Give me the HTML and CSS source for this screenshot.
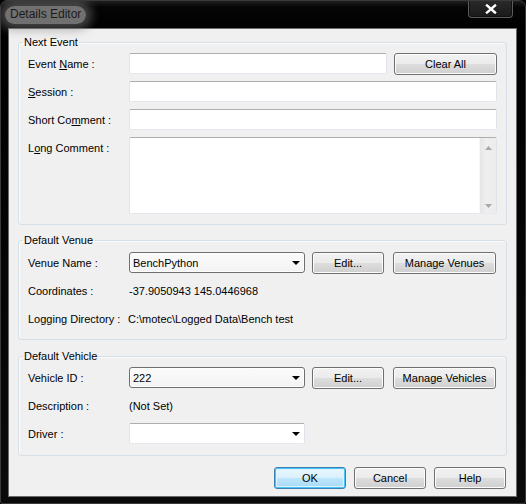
FILE: index.html
```html
<!DOCTYPE html>
<html>
<head>
<meta charset="utf-8">
<title>Details Editor</title>
<link rel="stylesheet" href="styles.css">
</head>
<body>
<div class="window">
  <div class="titlebar">
    <span class="title">Details Editor</span>
    <div class="close">
      <svg width="12" height="10" viewBox="0 0 12 10"><path d="M2 1.5 L10 8.5 M10 1.5 L2 8.5" stroke="#fff" stroke-width="2.4" stroke-linecap="square" fill="none"/></svg>
    </div>
  </div>
  <div class="client">
    <fieldset class="group g1">
      <legend>Next Event</legend>
      <div class="row">
        <span class="label">Event <u>N</u>ame :</span>
        <div class="edit w-event"></div>
        <button class="btn w-wide">Clear All</button>
      </div>
      <div class="row">
        <span class="label"><u>S</u>ession :</span>
        <div class="edit grow"></div>
      </div>
      <div class="row">
        <span class="label">Short Co<u>m</u>ment :</span>
        <div class="edit grow"></div>
      </div>
      <div class="row tall">
        <span class="label">L<u>o</u>ng Comment :</span>
        <div class="edit grow memo">
          <div class="memo-text"></div>
          <div class="vscroll">
            <svg width="7" height="4" viewBox="0 0 7 4"><path d="M0 4 L3.5 0 L7 4 Z" fill="#a8a8a8"/></svg>
            <svg width="7" height="4" viewBox="0 0 7 4"><path d="M0 0 L7 0 L3.5 4 Z" fill="#a8a8a8"/></svg>
          </div>
        </div>
      </div>
    </fieldset>

    <fieldset class="group g2">
      <legend>Default Venue</legend>
      <div class="row">
        <span class="label">Venue Name :</span>
        <div class="combo dark"><span>BenchPython</span><i class="arrow"></i></div>
        <button class="btn w-edit">Edit...</button>
        <button class="btn w-wide">Manage Venues</button>
      </div>
      <div class="row">
        <span class="label">Coordinates :</span>
        <span class="value">-37.9050943 145.0446968</span>
      </div>
      <div class="row">
        <span class="label">Logging Directory :</span>
        <span class="value shift">C:\motec\Logged Data\Bench test</span>
      </div>
    </fieldset>

    <fieldset class="group g3">
      <legend>Default Vehicle</legend>
      <div class="row">
        <span class="label">Vehicle ID :</span>
        <div class="combo dark"><span>222</span><i class="arrow"></i></div>
        <button class="btn w-edit">Edit...</button>
        <button class="btn w-wide">Manage Vehicles</button>
      </div>
      <div class="row">
        <span class="label">Description :</span>
        <span class="value">(Not Set)</span>
      </div>
      <div class="row">
        <span class="label">Driver :</span>
        <div class="combo light"><span></span><i class="arrow"></i></div>
      </div>
    </fieldset>

    <div class="actions">
      <button class="btn w-edit default">OK</button>
      <button class="btn w-edit">Cancel</button>
      <button class="btn w-edit">Help</button>
    </div>
  </div>
</div>
</body>
</html>
```

FILE: styles.css
```css
html, body {
  margin: 0;
  padding: 0;
  background: #000;
}

body {
  width: 526px;
  height: 504px;
  overflow: hidden;
  font-family: "Liberation Sans", Arial, sans-serif;
  font-size: 11px;
  color: #000;
}

.window {
  width: 526px;
  height: 504px;
  box-sizing: border-box;
  background: linear-gradient(#1e1e1e 0px, #050505 6px, #000 30px, #0a0a0a 100%);
  border: 1px solid #3a3a3a;
  border-radius: 7px 7px 2px 2px;
  overflow: hidden;
}

.titlebar {
  height: 27px;
  display: flex;
  align-items: flex-start;
  justify-content: space-between;
}

.title {
  margin: 5px 0 0 4px;
  padding: 1px 5px 2px 5px;
  font-size: 12px;
  line-height: 15px;
  color: #1b1b1b;
  background: rgba(150, 150, 150, 0.75);
  border-radius: 10px;
  box-shadow: 0 0 10px 6px rgba(120, 120, 120, 0.55);
}

.close {
  width: 45px;
  height: 18px;
  margin-top: -1px;
  margin-right: 12px;
  box-sizing: border-box;
  border: 1px solid #5c5c5c;
  border-top: none;
  border-radius: 0 0 4px 4px;
  background: linear-gradient(#2a2a2a, #1a1a1a);
  box-shadow: inset 0 0 0 1px #111;
  display: flex;
  align-items: center;
  justify-content: center;
  padding-top: 1px;
}

.close svg { display: block; }

.client {
  width: 509px;
  height: 469px;
  margin-left: 7px;
  box-sizing: border-box;
  background: #f0f0f0;
  border: 1px solid #6b6b6b;
  padding: 7px 9px 0 9px;
}

.group {
  margin: 0;
  padding: 4px 9px 10px 9px;
  border: 1px solid #d5dfe5;
  border-radius: 3px;
  box-shadow: inset 1px 1px 0 #fbfbfb;
  min-width: 0;
  display: flex;
  flex-direction: column;
  gap: 7px;
}

.group legend {
  padding: 0 1px;
  margin-left: -5px;
  line-height: 13px;
  font-size: 11px;
}

.g2 { margin-top: 9px; padding-top: 5px; }
.g3 { margin-top: 10px; padding-bottom: 11px; }

.row {
  height: 21px;
  display: flex;
  align-items: center;
}

.row.tall {
  height: 77px;
  align-items: flex-start;
}

.row.tall .label { margin-top: 5px; }

.label {
  width: 101px;
  flex: none;
  white-space: nowrap;
}

.value { white-space: nowrap; }
.value.shift { margin-left: -1px; }

u { text-decoration: underline; text-underline-offset: 1px; }

.edit {
  height: 21px;
  box-sizing: border-box;
  background: #fff;
  border: 1px solid #e2e3ea;
  border-top-color: #abadb3;
  border-bottom-color: #e3e9ef;
  border-radius: 2px;
}

.w-event { width: 258px; flex: none; margin-right: 7px; }
.grow { flex: 1; }

.memo {
  height: 77px;
  display: flex;
  justify-content: flex-end;
}

.memo-text { flex: 1; }

.vscroll {
  width: 17px;
  margin: 0;
  box-sizing: border-box;
  background: linear-gradient(90deg, #e6e6e6, #efefef 40%, #ececec);
  border-left: 1px solid #f7f7f7;
  display: flex;
  flex-direction: column;
  justify-content: space-between;
  align-items: center;
  padding: 8px 0 5px 0;
}

.vscroll svg { display: block; }

.btn {
  height: 22px;
  box-sizing: border-box;
  margin: 0;
  padding: 0;
  font-family: "Liberation Sans", Arial, sans-serif;
  font-size: 11px;
  color: #000;
  border: 1px solid #707070;
  border-radius: 3px;
  background: linear-gradient(#f2f2f2 0%, #ebebeb 48%, #dddddd 52%, #cfcfcf 100%);
  box-shadow: inset 0 0 0 1px #fcfcfc;
  flex: none;
}

.w-wide { width: 103px; }
.w-edit { width: 72px; }

.combo {
  width: 176px;
  height: 21px;
  flex: none;
  box-sizing: border-box;
  display: flex;
  align-items: center;
  justify-content: space-between;
  padding: 0 4px 0 3px;
  margin-right: 7px;
}

.combo.dark {
  border: 1px solid #707070;
  border-radius: 3px;
  background: linear-gradient(#fbfbfb, #f3f3f3);
  box-shadow: inset 0 0 0 1px #fff;
}

.combo.light {
  background: #fff;
  border: 1px solid #e2e3ea;
  border-top-color: #abadb3;
  border-bottom-color: #e3e9ef;
  border-radius: 2px;
}

.combo + .btn.w-edit { margin-right: 9px; }

.arrow {
  width: 0;
  height: 0;
  border-left: 4px solid transparent;
  border-right: 4px solid transparent;
  border-top: 4px solid #000;
  margin-top: 1px;
}

.actions {
  margin-top: 11px;
  margin-right: 1px;
  display: flex;
  justify-content: flex-end;
  gap: 8px;
}

.btn.default {
  border-color: #3c7fb1;
  background: linear-gradient(#eaf6fd 0%, #d9f0fc 48%, #bee6fd 52%, #a7d9f5 100%);
  box-shadow: inset 0 0 0 1px #48c4f8, inset 0 0 0 2px #dff3fe;
}
```
